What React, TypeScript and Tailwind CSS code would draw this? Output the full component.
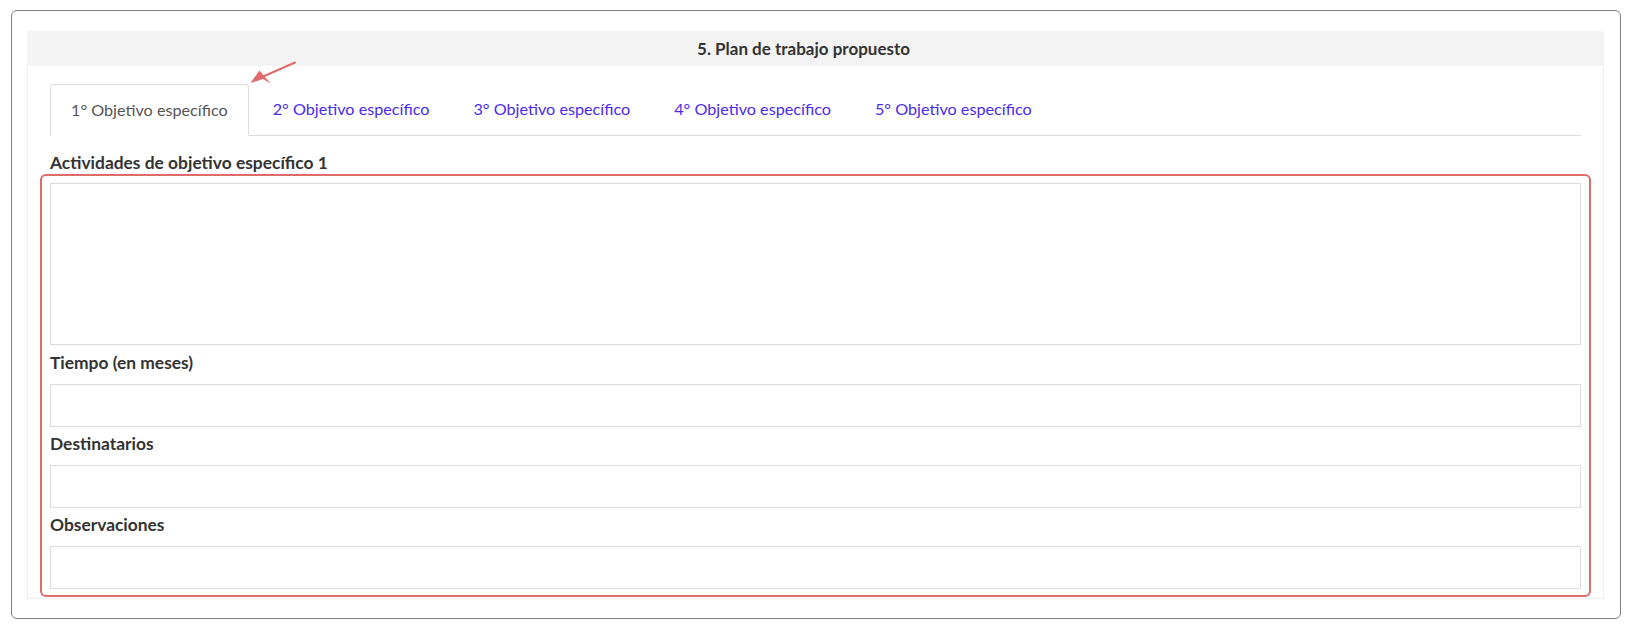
import React from "react";

const tabs = [
  "1° Objetivo específico",
  "2° Objetivo específico",
  "3° Objetivo específico",
  "4° Objetivo específico",
  "5° Objetivo específico",
];

function Field({ label, first }: { label: string; first?: boolean }) {
  return (
    <div>
      <div
        className={`${first ? "mt-[6px]" : "mt-[5px]"} mb-[9px] h-[24px] leading-[24px] text-[17.4px] font-bold text-[#333333]`}
      >
        {label}
      </div>
      <div className="h-[43px] border border-[#dcdde3] bg-white" />
    </div>
  );
}

export default function App() {
  return (
    <div
      className="relative w-[1635px] h-[631px] bg-white pt-[10px] pl-[11px]"
      style={{ fontFamily: "Lato, 'Noto Sans', sans-serif" }}
    >
      <div className="w-[1610px] h-[609px] border border-[#7d7d7d] rounded-[6px] pt-[20px] pl-[15px] pr-[16px]">
        <div className="w-full">
          <div className="h-[35px] bg-[#f3f3f3] flex items-center justify-center pr-[24px] text-[17px] font-bold text-[#333333]">
            5. Plan de trabajo propuesto
          </div>
          <div className="border-x border-b border-[#efefef] px-[22px] pt-[18px] pb-[1px]">
            <div className="flex h-[52px] border-b border-[#dddddd]">
              {tabs.map((t, i) =>
                i === 0 ? (
                  <div
                    key={t}
                    className="h-[52px] -mb-px mr-[4px] px-[20px] flex items-center border border-[#dddddd] border-b-white rounded-t-[4px] bg-white text-[16.2px] text-[#555555]"
                  >
                    {t}
                  </div>
                ) : (
                  <div
                    key={t}
                    className="h-[51px] mr-[4px] px-[20px] flex items-center text-[16.2px] text-[#4a2af0]"
                  >
                    {t}
                  </div>
                )
              )}
            </div>
            <div className="mt-[15px] h-[23px] leading-[23px] text-[17.4px] font-bold text-[#333333]">
              Actividades de objetivo específico 1
            </div>
            <div className="-mx-[10px] border-2 border-[#e06b6b] rounded-[6px] px-[8px] pt-[7px] pb-[6px]">
              <div className="h-[162px] border border-[#dcdde3] bg-white" />
              <Field label="Tiempo (en meses)" first />
              <Field label="Destinatarios" />
              <Field label="Observaciones" />
            </div>
          </div>
        </div>
      </div>
      <svg
        className="absolute left-[240px] top-[55px]"
        width="65"
        height="35"
        viewBox="240 55 65 35"
      >
        <line x1="295" y1="62.5" x2="262" y2="77" stroke="#e06b6b" strokeWidth="2" strokeLinecap="round" />
        <polygon points="250.5,83 259.5,70.5 270.5,83.5 263,79" fill="#e06b6b" />
      </svg>
    </div>
  );
}
